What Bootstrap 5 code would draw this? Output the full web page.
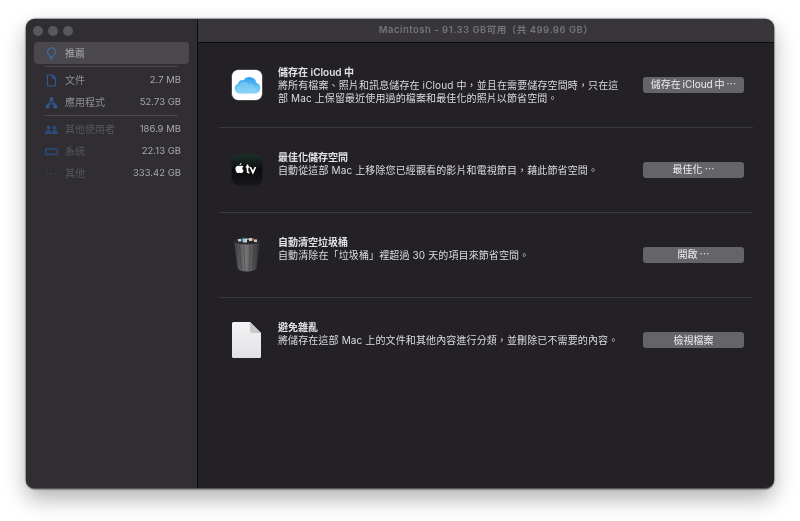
<!DOCTYPE html>
<html lang="zh-TW">
<head>
<meta charset="utf-8">
<title>Storage</title>
<link href="https://cdn.jsdelivr.net/npm/bootstrap@5.3.0/dist/css/bootstrap.min.css" rel="stylesheet">
<style>
html,body{height:521px;overflow:hidden;background:#fff}
body{padding:19px 26px 32px;font-family:"Inter","Noto Sans CJK TC",sans-serif;font-size:10px;color:#dcdbdc}
.mac-win{height:470px;border-radius:9px;overflow:hidden;box-shadow:0 0 0 .5px #777,0 0 3px rgba(0,0,0,.35),0 10px 22px rgba(0,0,0,.3);background:#232126;border-bottom:1px solid #57565a;filter:blur(.3px)}
.mac-side{width:172px;flex:none;background:#302e33;border-right:1px solid #0d0c0e;padding:7px 8px 0}
.mac-lights{gap:5px;height:10px;margin-left:-1px}
.mac-dot{width:10px;height:10px;border-radius:50%;background:#59585c}
.side-sel{height:22px;margin-top:6px;background:#4a484d;border-radius:4px;padding-left:11px;color:#a9a8aa}
.side-sel .side-ico{color:#3a6aa3}
.side-line{height:1px;background:#4a484d;margin:2px 11px}
.side-row{height:22px;padding:0 8px 0 11px;color:#908f92}
.side-row.is-dim .side-name{color:#58575b}
.side-row.is-dim .side-ico{color:#2a4c7c}
.side-ico{width:13px;height:13px;flex:none;margin-right:7px;color:#2f5a93}
.side-val{margin-left:auto;color:#a8a7aa;font-size:9.5px}
.mac-main{min-width:0}
.mac-title{height:24px;background:#38363b;border-bottom:1px solid #0a090b;color:#757478;font-weight:600;letter-spacing:.5px;font-size:9.5px}
.mac-pane{padding:0 21px}
.tip-row{height:85px;border-bottom:1px solid #39383c;padding:23px 9px 0 12px}
.tip-row:last-child{border-bottom:0}
.tip-ico{width:32px;height:32px;flex:none;margin-right:15px;align-self:center;margin-top:-24px}
.tip-ico.is-tall{height:36px;margin-top:-25px}
.tip-body{width:347px;line-height:12.5px;flex:none;letter-spacing:.12px}
.tip-body.is-wide{width:360px}
.tip-name{font-weight:600;color:#e2e1e2;line-height:13px;letter-spacing:0}
.tip-btn{width:101px;height:16px;background:#656469;border-radius:3px;color:#eeedee;font-size:10px;line-height:15px;text-align:center;margin-left:auto;align-self:center;margin-top:-24px;padding:0;border:0;word-spacing:-1px}
</style>
</head>
<body>
<div class="mac-win d-flex">
  <aside class="mac-side">
    <div class="mac-lights d-flex"><span class="mac-dot"></span><span class="mac-dot"></span><span class="mac-dot"></span></div>
    <div class="side-sel d-flex align-items-center">
      <svg class="side-ico" viewBox="0 0 13 13" fill="none" stroke="currentColor" stroke-width="1.2"><path d="M6.500 .8a4 4 0 0 0-2.500 7c.6.6.9 1.200 1 1.800h3c.1-.6.4-1.200 1-1.800a4 4 0 0 0-2.500-7zM5.200 11.200h2.600M5.800 12.500h1.400"/></svg>
      <span>推薦</span>
    </div>
    <div class="side-line"></div>
    <div class="side-row d-flex align-items-center">
      <svg class="side-ico" viewBox="0 0 13 13" fill="none" stroke="currentColor" stroke-width="1.200"><path d="M2.500 1h5l3 3v7.200q0 .8-.8.800H3.300q-.8 0-.8-.8zM7.500 1v3h3"/></svg>
      <span class="side-name">文件</span><span class="side-val">2.7 MB</span>
    </div>
    <div class="side-row d-flex align-items-center">
      <svg class="side-ico" viewBox="0 0 13 13" fill="none" stroke="currentColor" stroke-width="1.200"><path d="M6.500 3 3.500 9.500M6.500 3l3 6.500M2 8h9"/><circle cx="6.500" cy="2.800" r="1.300" fill="currentColor"/><circle cx="2.600" cy="10.500" r="1.500" fill="currentColor"/><circle cx="10.400" cy="10.500" r="1.500" fill="currentColor"/></svg>
      <span class="side-name">應用程式</span><span class="side-val">52.73 GB</span>
    </div>
    <div class="side-line"></div>
    <div class="side-row is-dim d-flex align-items-center">
      <svg class="side-ico" viewBox="0 0 13 13" fill="currentColor"><circle cx="3.600" cy="4.500" r="2"/><circle cx="9.400" cy="4.500" r="2"/><path d="M0 11c0-2.500 1.500-4 3.600-4s2.600 1.500 2.600 4zM6.800 11c0-2.500 .8-4 2.600-4s3.600 1.500 3.600 4z"/></svg>
      <span class="side-name">其他使用者</span><span class="side-val">186.9 MB</span>
    </div>
    <div class="side-row is-dim d-flex align-items-center">
      <svg class="side-ico" viewBox="0 0 13 13" fill="none" stroke="currentColor" stroke-width="1.300"><rect x=".7" y="4" width="11.600" height="5.500" rx="1"/></svg>
      <span class="side-name">系統</span><span class="side-val">22.13 GB</span>
    </div>
    <div class="side-row is-dim d-flex align-items-center">
      <svg class="side-ico" viewBox="0 0 13 13" fill="currentColor"><circle cx="2.500" cy="6.500" r=".8"/><circle cx="6.500" cy="6.500" r=".8"/><circle cx="10.500" cy="6.500" r=".8"/></svg>
      <span class="side-name">其他</span><span class="side-val">333.42 GB</span>
    </div>
  </aside>
  <main class="mac-main flex-grow-1 d-flex flex-column">
    <header class="mac-title d-flex align-items-center justify-content-center">Macintosh - 91.33 GB可用（共 499.96 GB）</header>
    <div class="mac-pane">
      <section class="tip-row d-flex">
        <svg class="tip-ico" viewBox="0 0 32 32"><defs><linearGradient id="cl" x1="0" y1="0" x2="0" y2="1"><stop offset="0" stop-color="#2e9fee"/><stop offset="1" stop-color="#8fd6f8"/></linearGradient></defs><rect x=".5" y=".5" width="31" height="31" rx="7" fill="#fff" stroke="#1a1a1c" stroke-width=".6"/><path d="M8.500 24.500a5 5 0 0 1-1.500-9.700 4.500 4.500 0 0 1 5.600-3.600A7.200 7.200 0 0 1 25.600 14a5.400 5.400 0 0 1-1.600 10.500z" fill="url(#cl)"/><path d="M9 24.500a4 4 0 0 1-.5-7.900 5 5 0 0 1 9.300-1.300 4 4 0 0 1 5.400 3 3.200 3.200 0 0 1-.2 6.200z" fill="#8ad2f8" opacity=".55"/></svg>
        <div class="tip-body"><div class="tip-name">儲存在 iCloud 中</div>將所有檔案、照片和訊息儲存在 iCloud 中，並且在需要儲存空間時，只在這部 Mac 上保留最近使用過的檔案和最佳化的照片以節省空間。</div>
        <button class="tip-btn" type="button">儲存在 iCloud 中 ⋯</button>
      </section>
      <section class="tip-row d-flex">
        <svg class="tip-ico" viewBox="0 0 32 32"><defs><linearGradient id="tv" x1="0" y1="0" x2="0" y2="1"><stop offset="0" stop-color="#1c2f28"/><stop offset=".5" stop-color="#0c0c0d"/><stop offset="1" stop-color="#17171a"/></linearGradient></defs><rect x=".5" y=".5" width="31" height="31" rx="7" fill="url(#tv)"/><path d="M10.300 11.700c-.6 0-1.100.3-1.600.3s-1-.3-1.600-.3c-1.500 0-2.700 1.300-2.700 3.100 0 2.100 1.400 4.300 2.500 4.300.5 0 .9-.3 1.700-.3s1.100.3 1.700.3c1 0 1.900-1.500 2.300-2.700-1.700-.7-1.700-3.400 0-3.900-.5-.5-1.500-.8-2.300-.8zM8.600 11.300c0-1.200.8-2.100 1.900-2.200 0 1.200-.8 2.100-1.900 2.200z" fill="#fff"/><path d="M16.500 10.500v2.500M14.800 13h3.600M16.500 13v4c0 1.200.6 1.700 2 1.500M19.300 13l2.600 5.700 2.600-5.700" fill="none" stroke="#fff" stroke-width="1.700"/></svg>
        <div class="tip-body"><div class="tip-name">最佳化儲存空間</div>自動從這部 Mac 上移除您已經觀看的影片和電視節目，藉此節省空間。</div>
        <button class="tip-btn" type="button">最佳化 ⋯</button>
      </section>
      <section class="tip-row d-flex">
        <svg class="tip-ico is-tall" viewBox="0 0 32 36"><defs><linearGradient id="bin" x1="0" y1="0" x2="1" y2="0"><stop offset="0" stop-color="#3a3a3c"/><stop offset=".45" stop-color="#77777a"/><stop offset="1" stop-color="#2f2f31"/></linearGradient></defs><path d="M3 4.500 6.500 32c.3 2 5.500 3.500 9.500 3.500s9.200-1.500 9.500-3.500L29 4.500z" fill="url(#bin)"/><path d="M8.500 9l2 24M13 10l1 25M19 10l-1 25M23.500 9l-2 24" stroke="#2c2c2e" stroke-width=".6" opacity=".6" fill="none"/><ellipse cx="16" cy="5" rx="13" ry="3.600" fill="#2a2a2c"/><path d="M7 5.500h3V3H7zM12 6.500h4V2.500h-4zM18 5h3V2h-3zM23 6h3V3.500h-3z" fill="#c9c9cb"/><path d="M10.500 5.500h2V2.500h-2z" fill="#3f9fd0"/><path d="M21 4.500h2V2.500h-2z" fill="#c0563f"/><path d="M16 4h2V2.500h-2z" fill="#6fae6a"/></svg>
        <div class="tip-body"><div class="tip-name">自動清空垃圾桶</div>自動清除在「垃圾桶」裡超過 30 天的項目來節省空間。</div>
        <button class="tip-btn" type="button">開啟 ⋯</button>
      </section>
      <section class="tip-row d-flex">
        <svg class="tip-ico is-tall" viewBox="0 0 32 36"><defs><linearGradient id="dc" x1="0" y1="0" x2="0" y2="1"><stop offset="0" stop-color="#f4f4f5"/><stop offset="1" stop-color="#e2e2e4"/></linearGradient></defs><path d="M1 1.500Q1 0 2.500 0H19l11 11v23.500q0 1.500-1.500 1.500h-26Q1 36 1 34.500z" fill="url(#dc)"/><path d="M19 0v9q0 2 2 2h9z" fill="#c9c9cb"/></svg>
        <div class="tip-body is-wide"><div class="tip-name">避免雜亂</div>將儲存在這部 Mac 上的文件和其他內容進行分類，並刪除已不需要的內容。</div>
        <button class="tip-btn" type="button">檢視檔案</button>
      </section>
    </div>
  </main>
</div>
<script src="https://cdn.jsdelivr.net/npm/bootstrap@5.3.0/dist/js/bootstrap.bundle.min.js"></script>
</body>
</html>
